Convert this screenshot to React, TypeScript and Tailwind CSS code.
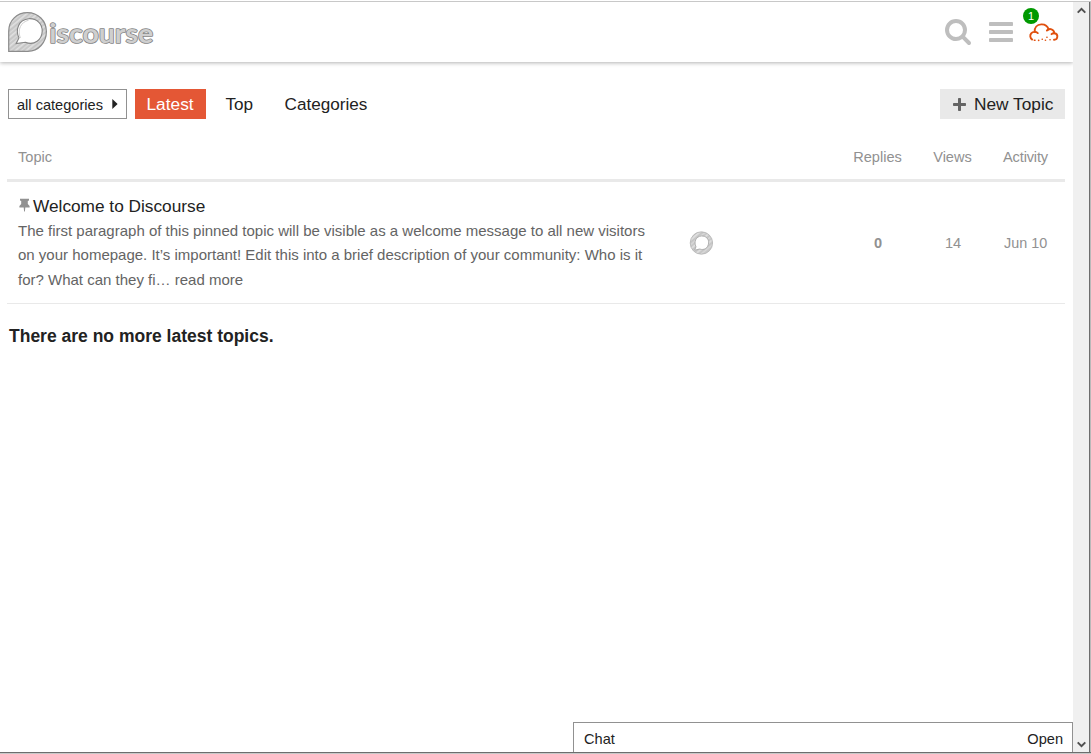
import React from "react";

function Hatch({ id }: { id: string }) {
  return (
    <pattern id={id} width="7" height="7" patternUnits="userSpaceOnUse" patternTransform="rotate(50)">
      <rect width="7" height="7" fill="#cdcdcd" />
      <rect x="0.4" width="0.9" height="7" fill="#efefef" />
      <rect x="2.4" width="0.7" height="7" fill="#bdbdbd" />
      <rect x="4.2" width="0.6" height="7" fill="#e4e4e4" />
      <rect x="5.8" width="0.6" height="7" fill="#c0c0c0" />
    </pattern>
  );
}

function Logo() {
  return (
    <svg width="148" height="44" viewBox="0 0 148 44" className="block" aria-label="Discourse">
      <defs>
        <Hatch id="hatch" />
      </defs>
      <path
        d="M1.7 40.3V20.2C1.7 9.3 10 1.6 20.5 1.6S39.4 9.8 39.4 20.6 31.4 40.3 21 40.3Z"
        fill="url(#hatch)"
        stroke="#8c8c8c"
        strokeWidth="1.2"
      />
      <path
        d="M9.2 32.6L12 26.8C8.2 19 11.2 8.6 21.8 7.7C30 7.2 35.4 13 35.2 20.2C35 28.4 27.4 35 18.4 31.2Z"
        fill="#fff"
        stroke="#858585"
        strokeWidth="1.1"
      />
      <path d="M13.4 27C10 18.6 14 11 21.6 9.2" fill="none" stroke="#c4c4c4" strokeWidth="0.8" />
      <text
        x="42.2"
        y="32"
        textLength="104"
        lengthAdjust="spacingAndGlyphs"
        fontFamily="Lato, sans-serif"
        fontSize="26"
        fontWeight="700"
        fill="#cfcfcf"
        stroke="#858585"
        strokeWidth="1.5"
        strokeLinejoin="round"
        paintOrder="stroke"
      >
        iscourse
      </text>
    </svg>
  );
}

function Avatar() {
  return (
    <svg width="24" height="24" viewBox="0 0 24 24" className="block">
      <defs>
        <Hatch id="hatch-small" />
      </defs>
      <circle cx="12.4" cy="12" r="11.2" fill="url(#hatch-small)" stroke="#b4b4b4" strokeWidth="0.8" />
      <path
        d="M5.6 19.2L7 15.8C4.6 10.8 7 5.4 12.4 5C17 4.8 20 8 19.6 12C19.2 17 15 19.6 10.7 18Z"
        fill="#fff"
        stroke="#a2a2a2"
        strokeWidth="0.8"
      />
    </svg>
  );
}

function Glyph({ d, size }: { d: string; size: number }) {
  return (
    <svg width={size} height={size} viewBox="0 0 1792 1792" fill="currentColor" className="block shrink-0">
      <path d={d} />
    </svg>
  );
}

const SEARCH =
  "M1216 832q0-185-131.5-316.5t-316.5-131.5-316.5 131.5-131.5 316.5 131.5 316.5 316.5 131.5 316.5-131.5 131.5-316.5zm512 832q0 52-38 90t-90 38q-54 0-90-38l-343-342q-179 124-399 124-143 0-273.5-55.5t-225-150-150-225-55.5-273.5 55.5-273.5 150-225 225-150 273.5-55.5 273.5 55.5 225 150 150 225 55.5 273.5q0 220-124 399l343 343q37 37 37 90z";
const BARS =
  "M1664 1344v128q0 26-19 45t-45 19h-1408q-26 0-45-19t-19-45v-128q0-26 19-45t45-19h1408q26 0 45 19t19 45zm0-512v128q0 26-19 45t-45 19h-1408q-26 0-45-19t-19-45v-128q0-26 19-45t45-19h1408q26 0 45 19t19 45zm0-512v128q0 26-19 45t-45 19h-1408q-26 0-45-19t-19-45v-128q0-26 19-45t45-19h1408q26 0 45 19t19 45z";

function Pin() {
  return (
    <svg width="13" height="14" viewBox="0 0 13 14" fill="currentColor" className="block shrink-0">
      <path d="M2 0.8H11V2.6L9.8 3V6L11.6 8V9.4H7.3L6.9 13.4H6.1L5.7 9.4H1.4V8L3.2 6V3L2 2.6Z" />
    </svg>
  );
}

function Plus() {
  return (
    <svg width="17" height="17" viewBox="0 0 17 17" fill="currentColor" className="block shrink-0">
      <path d="M7.8 2H9.2Q10 2 10 2.8V7H14.2Q15 7 15 7.8V9.2Q15 10 14.2 10H10V14.2Q10 15 9.2 15H7.8Q7 15 7 14.2V10H2.8Q2 10 2 9.2V7.8Q2 7 2.8 7H7V2.8Q7 2 7.8 2Z" />
    </svg>
  );
}

function Cloud() {
  return (
    <svg width="30" height="20" viewBox="0 0 30 20" fill="none" stroke="#e0500f" strokeWidth="1.9" strokeLinecap="round" className="block">
      <path d="M3.2 16.6C1 15.2 .7 12.2 2.2 10.4C3.2 9.2 4.4 8.8 5.7 8.9C5.4 4.6 8 1.7 12.2 1.4C15.8 1.2 18.6 3.1 19.7 6.6" />
      <path d="M5.7 8.9C7 8.9 8 9.3 8.8 10.1" />
      <path d="M17.9 7.5C20.6 4.8 25 6.2 25.3 10.2C27.5 10.6 28.6 12 28.3 14C28.1 15.8 26.9 16.8 25 16.7" />
      <path d="M25.3 10.2C24 10.1 23.2 10.5 22.5 11.2" />
      <path strokeWidth="1.6" d="M5.4 17.2H6M9.6 17.4H9.7M13.2 16.2H13.3M16.4 17.3H16.5M17.9 14.3H18M21 16.7H21.1" />
    </svg>
  );
}

function Header() {
  return (
    <header className="relative flex h-[60px] shrink-0 items-start justify-between bg-white pl-[7px] pr-[14px] shadow-[0_1px_4px_rgba(0,0,0,0.3)]">
      <div className="pt-[9px]">
        <Logo />
      </div>
      <div className="flex items-start text-[#bebebe]">
        <div className="mr-[15px] pt-[15px]">
          <Glyph d={SEARCH} size={28} />
        </div>
        <div className="mr-[14px] pt-4">
          <Glyph d={BARS} size={28} />
        </div>
        <div className="relative pt-[21px]">
          <Cloud />
          <span className="absolute -left-[6px] top-[6px] flex size-4 items-center justify-center rounded-full bg-[#090] text-[11px] leading-none text-white">
            1
          </span>
        </div>
      </div>
    </header>
  );
}

function Controls() {
  return (
    <div className="flex h-[30px] items-stretch text-[17.14px] text-[#222]">
      <button className="mr-2 flex w-[119px] items-center border border-[#919191] pl-2 text-left text-[14.6px]">
        <span className="w-[95px] whitespace-nowrap pt-[3px]">all categories</span>
        <svg width="6" height="10" viewBox="0 0 6 10">
          <path d="M0.3 0L5.6 5L0.3 10Z" fill="#222" />
        </svg>
      </button>
      <nav className="flex items-stretch">
        <a className="flex w-[71px] items-center bg-[#e45735] pl-[11.5px] pt-[2px] text-[17.3px] text-white">Latest</a>
        <a className="ml-[7.5px] flex items-center px-3 pt-[2px]">Top</a>
        <a className="ml-[7.5px] flex items-center px-3 pt-[2px]">Categories</a>
      </nav>
      <button className="ml-auto flex w-[125px] items-center bg-[#e9e9e9] pl-[11px]">
        <span className="mr-[6px] text-[#646464]">
          <Plus />
        </span>
        <span className="whitespace-nowrap pt-[2px] text-[17.3px]">New Topic</span>
      </button>
    </div>
  );
}

function TopicList() {
  return (
    <div className="-ml-px text-[15px]">
      <div className="grid h-[63px] grid-cols-[675px_158px_75px_75px_1fr] items-center border-b-[3px] border-[#e9e9e9] pt-[17px] text-[14.6px] text-[#919191]">
        <div className="pl-[11px]">Topic</div>
        <div />
        <div className="text-center">Replies</div>
        <div className="text-center">Views</div>
        <div className="pl-[13px] tracking-[-0.15px]">Activity</div>
      </div>
      <div className="grid h-[122px] grid-cols-[675px_158px_75px_75px_1fr] items-center border-b border-[#e9e9e9] text-[#919191]">
        <div className="pl-[11px] pt-[2px]">
          <div className="flex h-[24px] items-center text-[17.25px] text-[#222]">
            <span className="mr-[2px] pb-[3px] text-[#919191]">
              <Pin />
            </span>
            <span>Welcome to Discourse</span>
          </div>
          <div className="whitespace-nowrap leading-[24.5px] text-[#646464]">
            <p>The first paragraph of this pinned topic will be visible as a welcome message to all new visitors</p>
            <p>on your homepage. It’s important! Edit this into a brief description of your community: Who is it</p>
            <p>for? What can they fi… read more</p>
          </div>
        </div>
        <div className="pl-[7px]">
          <Avatar />
        </div>
        <div className="pl-px pt-[2px] text-center text-[14.6px] font-bold">0</div>
        <div className="pl-px pt-[2px] text-center text-[14.6px]">14</div>
        <div className="pl-[14px] pt-[2px] text-[14.4px]">Jun 10</div>
      </div>
    </div>
  );
}

function Scrollbar() {
  return (
    <div className="flex w-4 shrink-0 flex-col items-center justify-between bg-[#f0f0f0] pb-1 pt-[5px]">
      <svg width="9" height="7" viewBox="0 0 9 7" fill="none" stroke="#505050" strokeWidth="2">
        <path d="M0.7 5.6L4.5 1.8L8.3 5.6" />
      </svg>
      <svg width="9" height="7" viewBox="0 0 9 7" fill="none" stroke="#505050" strokeWidth="2">
        <path d="M0.7 1.4L4.5 5.2L8.3 1.4" />
      </svg>
    </div>
  );
}

export default function App() {
  return (
    <div className="flex h-[754px] w-[1091px] flex-col overflow-hidden bg-white pt-px font-['Liberation_Sans',Arial,sans-serif]">
      <div className="flex min-h-0 flex-1 border-t border-[#c8c8c8]">
        <div className="flex min-w-0 flex-1 flex-col overflow-hidden">
          <Header />
          <main className="flex-1 pl-2 pr-2 pt-[27px]">
            <Controls />
            <TopicList />
            <h3 className="pl-px pt-[20px] text-[17.5px] font-bold leading-6 text-[#222]">There are no more latest topics.</h3>
          </main>
          <div className="ml-auto flex h-[30px] w-[500px] shrink-0 items-center justify-between border border-b-0 border-[#919191] bg-white pl-[10px] pr-[9px] pt-1 text-[14.6px] text-[#222]">
            <span>Chat</span>
            <span>Open</span>
          </div>
        </div>
        <Scrollbar />
        <div className="w-[2px] shrink-0 border-l border-[#6d6d6d] bg-[#b9b9b9]" />
      </div>
      <div className="h-[2px] shrink-0 border-t border-[#6d6d6d] bg-[#c8c8c8]" />
    </div>
  );
}
